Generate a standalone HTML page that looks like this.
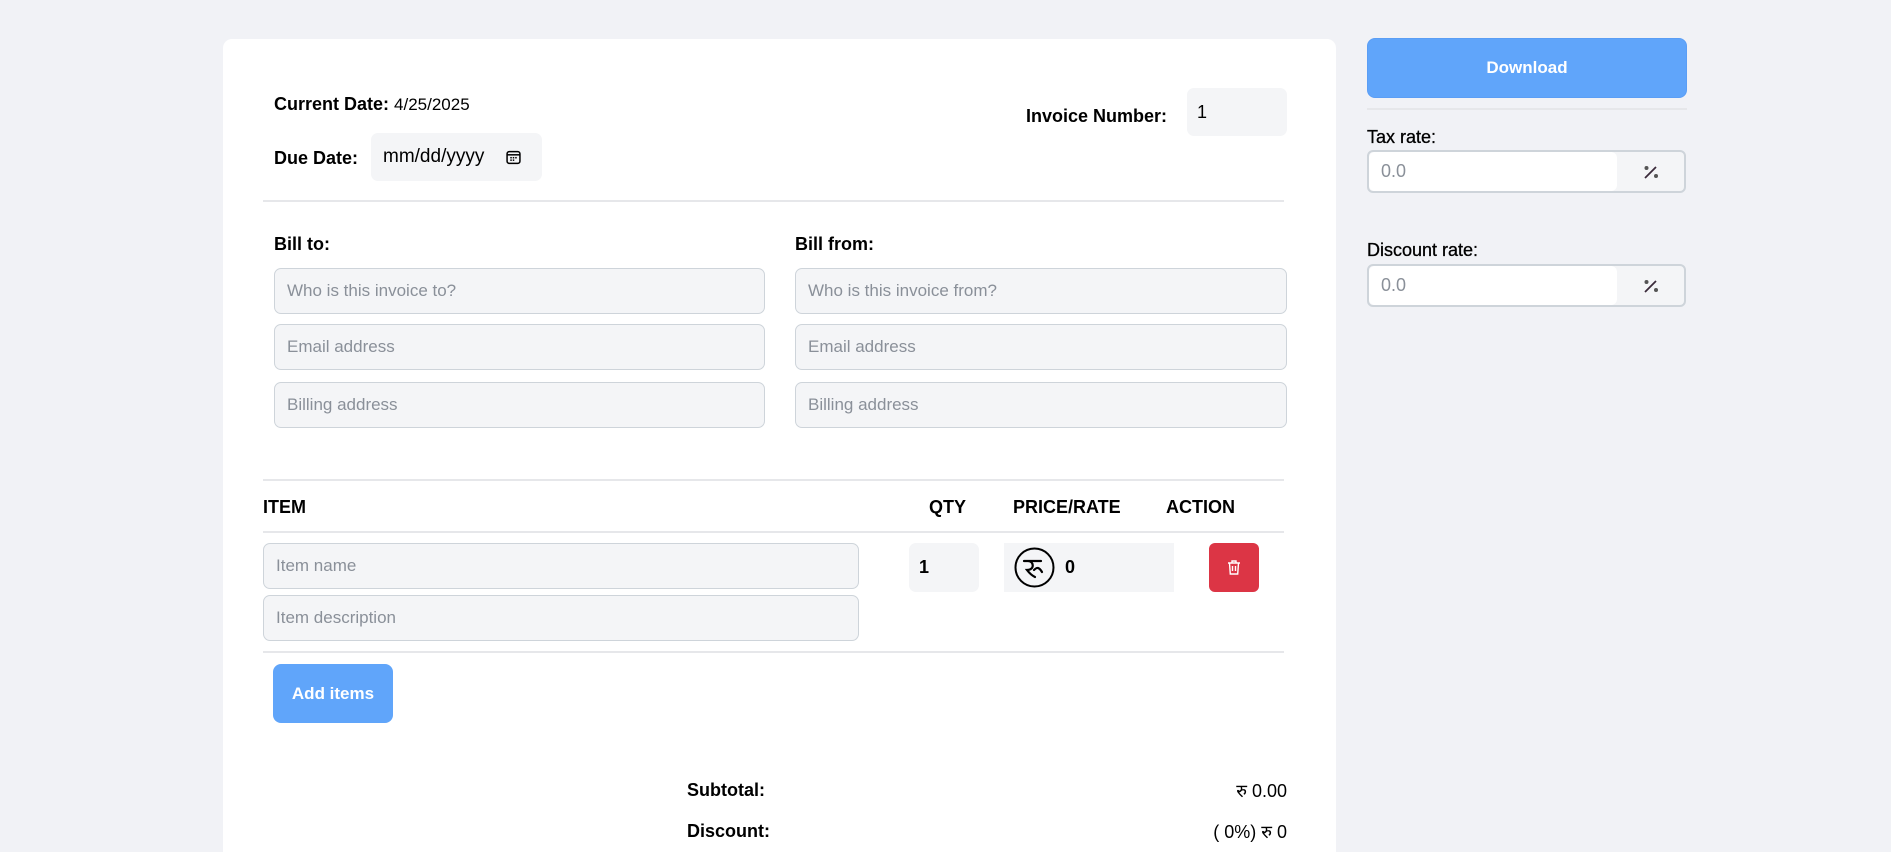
<!DOCTYPE html>
<html style="overflow:hidden;height:852px"><head><meta charset="utf-8"><style>
*{box-sizing:border-box;margin:0;padding:0}
body{width:1891px;height:852px;background:#f1f2f6;font-family:"Liberation Sans","Noto Sans CJK SC",sans-serif;color:#000;position:relative;overflow:hidden}
.a{position:absolute}
.card{left:223px;top:39px;width:1113px;height:813px;background:#fff;border-radius:9px 9px 0 0}
.lbl{font-size:18px;font-weight:bold;line-height:22px}
.inp{background:#f4f5f7;border:1px solid #ced4da;border-radius:7px;font-size:17px;color:#8a9099;padding-left:12px;display:flex;align-items:center}
.plain{background:#f4f5f7;border-radius:7px;display:flex;align-items:center;font-size:18px}
.hr{height:2px;background:#e6e7ea}
.th{font-size:18px;font-weight:bold;top:496px;line-height:22px}
.btn{background:#60a5fa;color:#fff;font-weight:bold;font-size:17px;display:flex;align-items:center;justify-content:center;border-radius:8px}
.rate{left:1367px;width:319px;height:43px;border:2px solid #ced4da;border-radius:6px;background:#f4f5f7;display:flex}
.rate .f{width:248px;background:#fff;border-radius:6px;font-size:18px;color:#8a9099;padding-left:12px;display:flex;align-items:center}
.rate .p{flex:1;display:flex;align-items:center;justify-content:center}
</style></head><body>
<div class="a card"></div>

<div class="a lbl" style="left:274px;top:93px">Current Date: <span style="font-weight:normal;font-size:17px">4/25/2025</span></div>
<div class="a lbl" style="left:274px;top:147px">Due Date:</div>
<div class="a plain" style="left:371px;top:133px;width:171px;height:48px;padding-left:12px;font-size:19px">mm/dd/yyyy
<svg style="margin-left:22px" width="15" height="15" viewBox="0 0 14 14"><rect x="1" y="1.5" width="12" height="11" rx="2" fill="none" stroke="#000" stroke-width="1.4"/><line x1="1" y1="4.5" x2="13" y2="4.5" stroke="#000" stroke-width="1.4"/><g fill="#000"><rect x="4" y="6.5" width="1.4" height="1.4"/><rect x="6.3" y="6.5" width="1.4" height="1.4"/><rect x="8.6" y="6.5" width="1.4" height="1.4"/><rect x="4" y="8.8" width="1.4" height="1.4"/><rect x="6.3" y="8.8" width="1.4" height="1.4"/></g></svg></div>
<div class="a lbl" style="left:1026px;top:105px">Invoice Number:</div>
<div class="a plain" style="left:1187px;top:88px;width:100px;height:48px;padding-left:10px">1</div>
<div class="a hr" style="left:263px;top:200px;width:1021px"></div>

<div class="a lbl" style="left:274px;top:233px">Bill to:</div>
<div class="a lbl" style="left:795px;top:233px">Bill from:</div>
<div class="a inp" style="left:274px;top:268px;width:491px;height:46px">Who is this invoice to?</div>
<div class="a inp" style="left:274px;top:324px;width:491px;height:46px">Email address</div>
<div class="a inp" style="left:274px;top:382px;width:491px;height:46px">Billing address</div>
<div class="a inp" style="left:795px;top:268px;width:492px;height:46px">Who is this invoice from?</div>
<div class="a inp" style="left:795px;top:324px;width:492px;height:46px">Email address</div>
<div class="a inp" style="left:795px;top:382px;width:492px;height:46px">Billing address</div>

<div class="a hr" style="left:263px;top:479px;width:1021px"></div>
<div class="a th" style="left:263px">ITEM</div>
<div class="a th" style="left:929px">QTY</div>
<div class="a th" style="left:1013px">PRICE/RATE</div>
<div class="a th" style="left:1166px">ACTION</div>
<div class="a hr" style="left:263px;top:531px;width:1021px"></div>

<div class="a inp" style="left:263px;top:543px;width:596px;height:46px">Item name</div>
<div class="a inp" style="left:263px;top:595px;width:596px;height:46px">Item description</div>
<div class="a plain" style="left:909px;top:543px;width:70px;height:49px;padding-left:10px;font-weight:bold">1</div>
<div class="a" style="left:1004px;top:543px;width:170px;height:49px;background:#f4f5f7;display:flex;align-items:center;font-size:18px;font-weight:bold">
<svg style="margin-left:10px;margin-right:10px" width="41" height="41" viewBox="0 0 41 41"><circle cx="20.5" cy="20.5" r="19" fill="none" stroke="#000" stroke-width="2"/><path d="M10 14h17M14 14c6 0 7 9-1 9 3 4 6 6 8 7M20 23c3-3 5-3 8 2" fill="none" stroke="#000" stroke-width="2.2" stroke-linecap="round"/></svg>0</div>
<div class="a" style="left:1209px;top:543px;width:50px;height:49px;background:#dc3545;border-radius:6px;display:flex;align-items:center;justify-content:center">
<svg width="14" height="15" viewBox="0 0 14 15"><path d="M1 3h12M5 3V1h4v2M2.5 3l.8 11h7.4l.8-11M5.5 6v5M8.5 6v5" fill="none" stroke="#fff" stroke-width="1.4"/></svg></div>
<div class="a hr" style="left:263px;top:651px;width:1021px"></div>

<div class="a btn" style="left:273px;top:664px;width:120px;height:59px">Add items</div>

<div class="a lbl" style="left:687px;top:779px">Subtotal:</div>
<div class="a" style="right:604px;top:779px;font-size:18px">रु 0.00</div>
<div class="a lbl" style="left:687px;top:820px">Discount:</div>
<div class="a" style="right:604px;top:820px;font-size:18px">( 0%) रु 0</div>

<div class="a btn" style="left:1367px;top:38px;width:320px;height:60px;border:1px solid #5b9ef5">Download</div>
<div class="a hr" style="left:1367px;top:108px;width:320px"></div>
<div class="a lbl" style="left:1367px;top:126px;font-weight:normal;font-size:18px;-webkit-text-stroke:0.3px #000">Tax rate:</div>
<div class="a rate" style="top:150px"><div class="f">0.0</div><div class="p"><svg width="16" height="14" viewBox="0 0 16 14"><line x1="2" y1="13" x2="13" y2="2" stroke="#3a2a3a" stroke-width="1.8"/><circle cx="3.5" cy="3" r="2" fill="#555"/><circle cx="13" cy="11" r="2" fill="#555"/></svg></div></div>
<div class="a lbl" style="left:1367px;top:239px;font-weight:normal;font-size:18px;-webkit-text-stroke:0.3px #000">Discount rate:</div>
<div class="a rate" style="top:264px"><div class="f">0.0</div><div class="p"><svg width="16" height="14" viewBox="0 0 16 14"><line x1="2" y1="13" x2="13" y2="2" stroke="#3a2a3a" stroke-width="1.8"/><circle cx="3.5" cy="3" r="2" fill="#555"/><circle cx="13" cy="11" r="2" fill="#555"/></svg></div></div>
</body></html>
